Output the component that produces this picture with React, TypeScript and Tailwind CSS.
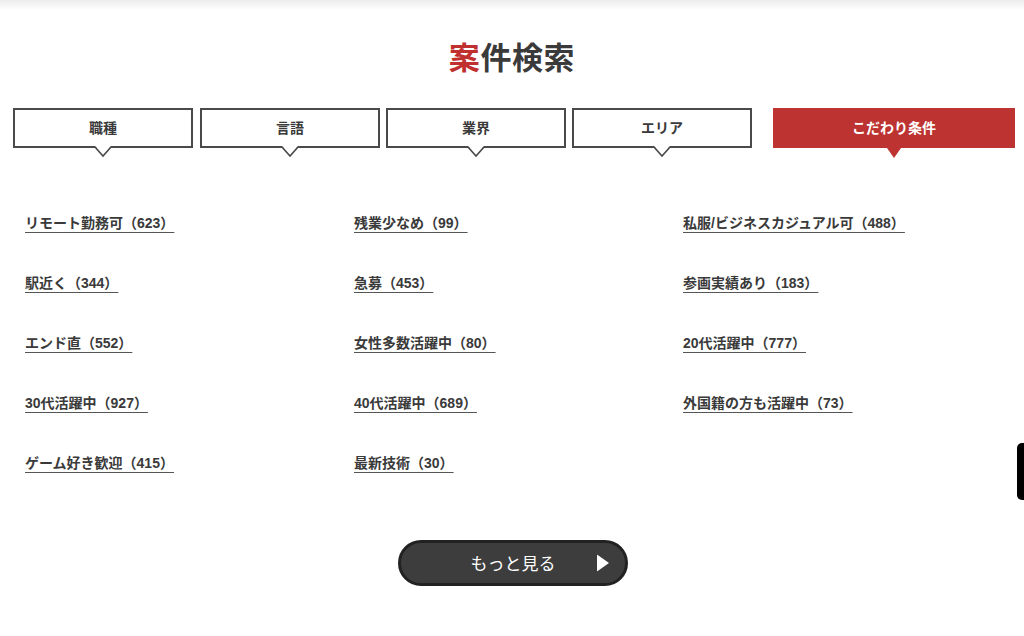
const font = { fontFamily: '"Noto Sans CJK JP", "Noto Sans", sans-serif' };
const linkFont = { fontFamily: '"Liberation Sans", "Noto Sans CJK JP", sans-serif' };

const tabs = [
  { label: "職種", w: "w-[180px]", ml: "" },
  { label: "言語", w: "w-[180px]", ml: "ml-[7px]" },
  { label: "業界", w: "w-[180px]", ml: "ml-[6px]" },
  { label: "エリア", w: "w-[180px]", ml: "ml-[6px]" },
];

const links = [
  "リモート勤務可（623）",
  "残業少なめ（99）",
  "私服/ビジネスカジュアル可（488）",
  "駅近く（344）",
  "急募（453）",
  "参画実績あり（183）",
  "エンド直（552）",
  "女性多数活躍中（80）",
  "20代活躍中（777）",
  "30代活躍中（927）",
  "40代活躍中（689）",
  "外国籍の方も活躍中（73）",
  "ゲーム好き歓迎（415）",
  "最新技術（30）",
];

export default function App() {
  return (
    <div className="w-[1024px] h-[636px] bg-white relative overflow-hidden" style={font}>
      <div className="h-[10px] bg-gradient-to-b from-[#ececec] to-white" />
      <h1 className="mt-[26px] text-center text-[31px] leading-[40px] font-bold text-[#3a3a3a] tracking-[0.02em]">
        <span className="text-[#c0302f]">案</span>件検索
      </h1>

      <div className="mt-[32px] flex pl-[13px]">
        {tabs.map((t) => (
          <div
            key={t.label}
            className={`relative ${t.w} ${t.ml} h-[40px] border-2 border-[#4a4a4a] bg-white flex items-center justify-center text-[14px] leading-[20px] font-bold text-[#3a3a3a]`}
          >
            <span className="-mt-[2px]">{t.label}</span>
            <svg className="absolute left-1/2 -translate-x-1/2 top-[36px]" width="16" height="12" viewBox="0 0 16 12">
              <polygon points="0,0 16,0 8,9" fill="white" />
              <polyline points="0,1 8,10 16,1" fill="none" stroke="#4a4a4a" strokeWidth="1.6" />
            </svg>
          </div>
        ))}
        <div className="relative w-[242px] ml-[21px] h-[40px] bg-[#bd3331] flex items-center justify-center text-[14px] leading-[20px] font-bold text-white">
          <span className="-mt-[2px]">こだわり条件</span>
          <svg className="absolute left-1/2 -translate-x-1/2 top-[40px]" width="14" height="10" viewBox="0 0 14 10">
            <polygon points="0,0 14,0 7,10" fill="#bd3331" />
          </svg>
        </div>
      </div>

      <div className="mt-[65px] pl-[25px] grid grid-cols-[329px_329px_329px] gap-y-[39px]">
        {links.map((l) => (
          <div key={l} className="h-[21px] flex items-center">
            <a
              href="#"
              style={linkFont}
              className="text-[14px] leading-[21px] font-bold text-[#3a3a3a] underline decoration-[#555] decoration-1 underline-offset-[4px]"
            >
              {l}
            </a>
          </div>
        ))}
      </div>

      <div className="mt-[66px] flex justify-center">
        <button className="relative w-[230px] h-[46px] ml-[2px] rounded-full bg-[#3d3d3d] border-[3px] border-[#222] text-white text-[17px] flex items-center justify-center">
          もっと見る
          <svg className="absolute right-[16px] top-1/2 -translate-y-1/2" width="12" height="17" viewBox="0 0 12 17">
            <polygon points="0,0 12,8.5 0,17" fill="white" />
          </svg>
        </button>
      </div>

      <div className="absolute right-0 top-[443px] w-[7px] h-[57px] bg-black rounded-l-[5px]" />
    </div>
  );
}
